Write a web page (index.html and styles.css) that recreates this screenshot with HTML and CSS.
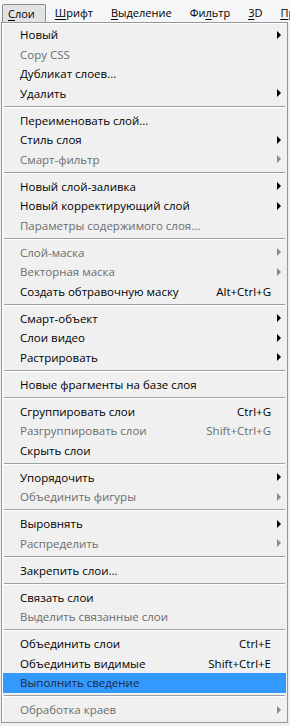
FILE: index.html
```html
<!DOCTYPE html>
<html lang="ru">
<head>
    <meta charset="UTF-8">
    <title>Слои</title>
    <link rel="stylesheet" href="styles.css">
</head>
<body>

<!-- Menu bar -->
<div class="menubar">
    <div class="top active"><u>С</u>лои</div>
    <div class="top"><u>Ш</u>рифт</div>
    <div class="top"><u>В</u>ыделение</div>
    <div class="top">Фи<u>л</u>ьтр</div>
    <div class="top"><u>3</u>D</div>
    <div class="top"><u>П</u>р</div>
</div>

<!-- Layer menu -->
<div class="menu">
    <div class="item"><span>Новый</span><span></span><i class="arrow"></i></div>
    <div class="item off"><span>Copy CSS</span></div>
    <div class="item"><span>Дубликат слоев...</span></div>
    <div class="item"><span>Удалить</span><span></span><i class="arrow"></i></div>
    <div class="sep"></div>
    <div class="item"><span>Переименовать слой...</span></div>
    <div class="item"><span>Стиль слоя</span><span></span><i class="arrow"></i></div>
    <div class="item off"><span>Смарт-фильтр</span><span></span><i class="arrow"></i></div>
    <div class="sep"></div>
    <div class="item"><span>Новый слой-заливка</span><span></span><i class="arrow"></i></div>
    <div class="item"><span>Новый корректирующий слой</span><span></span><i class="arrow"></i></div>
    <div class="item off"><span>Параметры содержимого слоя...</span></div>
    <div class="sep"></div>
    <div class="item off"><span>Слой-маска</span><span></span><i class="arrow"></i></div>
    <div class="item off"><span>Векторная маска</span><span></span><i class="arrow"></i></div>
    <div class="item"><span>Создать обтравочную маску</span><span class="key">Alt+Ctrl+G</span></div>
    <div class="sep"></div>
    <div class="item"><span>Смарт-объект</span><span></span><i class="arrow"></i></div>
    <div class="item"><span>Слои видео</span><span></span><i class="arrow"></i></div>
    <div class="item"><span>Растрировать</span><span></span><i class="arrow"></i></div>
    <div class="sep"></div>
    <div class="item"><span>Новые фрагменты на базе слоя</span></div>
    <div class="sep"></div>
    <div class="item"><span>Сгруппировать слои</span><span class="key">Ctrl+G</span></div>
    <div class="item off"><span>Разгруппировать слои</span><span class="key">Shift+Ctrl+G</span></div>
    <div class="item"><span>Скрыть слои</span></div>
    <div class="sep"></div>
    <div class="item"><span>Упорядочить</span><span></span><i class="arrow"></i></div>
    <div class="item off"><span>Объединить фигуры</span><span></span><i class="arrow"></i></div>
    <div class="sep"></div>
    <div class="item"><span>Выровнять</span><span></span><i class="arrow"></i></div>
    <div class="item off"><span>Распределить</span><span></span><i class="arrow"></i></div>
    <div class="sep"></div>
    <div class="item"><span>Закрепить слои...</span></div>
    <div class="sep"></div>
    <div class="item"><span>Связать слои</span></div>
    <div class="item off"><span>Выделить связанные слои</span></div>
    <div class="sep"></div>
    <div class="item"><span>Объединить слои</span><span class="key">Ctrl+E</span></div>
    <div class="item"><span>Объединить видимые</span><span class="key">Shift+Ctrl+E</span></div>
    <div class="item hover"><span>Выполнить сведение</span></div>
    <div class="sep"></div>
    <div class="item off"><span>Обработка краев</span><span></span><i class="arrow"></i></div>
</div>

</body>
</html>
```

FILE: styles.css
```css
body {
    margin: 0;
    background-color: #f0f0f0;
    font-family: "Open Sans", "Noto Sans", sans-serif;
    font-size: 11.5px;
    color: #000;
    overflow: hidden;
}

u {
    text-decoration: underline;
    text-underline-offset: 2px;
}

.menubar {
    display: flex;
    height: 22px;
    padding-left: 2px;
    background-color: #f5f6f7;
    white-space: nowrap;
    overflow: hidden;
}

.top {
    margin-top: 4px;
    padding: 0 9px;
    line-height: 17px;
    color: #000;
    font-size: 11px;
}

.top.active {
    padding: 0 10px 0 5px;
    border: 1px solid #8d8d8d;
    border-bottom: none;
    border-radius: 2px 2px 0 0;
    background-color: #e2e3e4;
}

.menu {
    width: 283px;
    margin-left: 1px;
    padding: 2px 1px;
    border: 1px solid #979797;
    background-color: #f0f0f0;
    box-shadow: inset 1px 1px 0 #fff;
}

.item {
    display: grid;
    grid-template-columns: 1fr auto 15px;
    align-items: center;
    height: 19.5px;
    padding-left: 17px;
    white-space: nowrap;
}

.item.off {
    color: #6d6d6d;
}

.item.hover {
    background-color: #3399ff;
    color: #1c2a3a;
}

.key {
    text-align: right;
}

.arrow {
    justify-self: start;
    margin-left: 6px;
    width: 0;
    height: 0;
    border-left: 4px solid #000;
    border-top: 4px solid transparent;
    border-bottom: 4px solid transparent;
}

.off .arrow {
    border-left-color: #8a8a8a;
}

.sep {
    height: 7.5px;
    margin: 0 1px;
    display: flex;
    flex-direction: column;
    justify-content: center;
}

.sep::before {
    content: "";
    display: block;
    border-top: 1px solid #a0a0a0;
    border-bottom: 1px solid #fff;
}
```
